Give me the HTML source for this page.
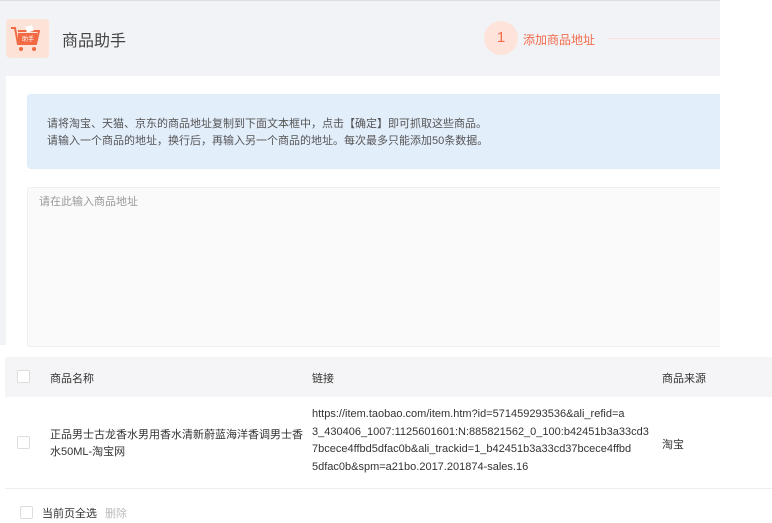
<!DOCTYPE html><html><head><meta charset="utf-8"><style>
*{margin:0;padding:0;box-sizing:border-box}
body{width:772px;height:523px;background:#fff;font-family:"Liberation Sans","Noto Sans CJK SC",sans-serif;position:relative;overflow:hidden;color:#333}
.a{position:absolute}
.cb{position:absolute;width:13px;height:13px;border:1px solid #ddd;border-radius:2px;background:#fff}
</style></head><body>
<div class="a" style="left:0;top:0;width:720px;height:345px;background:#f2f3f7;border-top:1px solid #ddd"></div>
<div class="a" style="left:6px;top:19px;width:43px;height:39px;background:#fde2d8;border-radius:4px"></div>
<svg class="a" style="left:9px;top:24px" width="36" height="30" viewBox="0 0 36 30"><path d="M2 4h4l3 16h18l3-13H9" fill="none" stroke="#f26a43" stroke-width="2"/><rect x="9" y="9" width="19" height="10" fill="#f26a43"/><text x="13" y="17" font-size="6" fill="#fff" font-family="Noto Sans CJK SC">助手</text><circle cx="12" cy="25" r="2" fill="#f26a43"/><circle cx="25" cy="25" r="2" fill="#f26a43"/><rect x="17" y="2" width="7" height="6" fill="#fff" transform="rotate(-15 20 5)"/></svg>
<div class="a" style="left:62px;top:27px;font-size:16px;color:#444">商品助手</div>
<div class="a" style="left:484px;top:21px;width:34px;height:34px;border-radius:50%;background:#fde3da;color:#f36c4a;font-size:15px;text-align:center;line-height:34px">1</div>
<div class="a" style="left:523px;top:31px;font-size:12px;color:#f36c4a">添加商品地址</div>
<div class="a" style="left:607px;top:38px;width:113px;height:1px;background:#fbe0d8"></div>
<div class="a" style="left:6px;top:76px;width:714px;height:269px;background:#fff"></div>
<div class="a" style="left:27px;top:94px;width:693px;height:75px;background:#e3eefb;border:1px solid #e0ebf9;border-right:none;border-radius:4px 0 0 4px"></div>
<div class="a" style="left:47px;top:116px;font-size:11px;color:#555;line-height:17px">请将淘宝、天猫、京东的商品地址复制到下面文本框中，点击【确定】即可抓取这些商品。<br>请输入一个商品的地址，换行后，再输入另一个商品的地址。每次最多只能添加50条数据。</div>
<div class="a" style="left:27px;top:187px;width:693px;height:160px;background:#fafafa;border:1px solid #eee;border-right:none;border-radius:3px 0 0 3px"></div>
<div class="a" style="left:39px;top:193px;font-size:11px;color:#999">请在此输入商品地址</div>
<div class="a" style="left:5px;top:357px;width:767px;height:40px;background:#f5f5f7"></div>
<div class="cb" style="left:17px;top:370px"></div>
<div class="a" style="left:50px;top:370px;font-size:11px">商品名称</div>
<div class="a" style="left:312px;top:370px;font-size:11px">链接</div>
<div class="a" style="left:662px;top:370px;font-size:11px">商品来源</div>
<div class="a" style="left:5px;top:488px;width:767px;height:1px;background:#eee"></div>
<div class="cb" style="left:17px;top:436px"></div>
<div class="a" style="left:50px;top:427px;font-size:11px;line-height:17px;white-space:nowrap">正品男士古龙香水男用香水清新蔚蓝海洋香调男士香<br>水50ML-淘宝网</div>
<div class="a" style="left:312px;top:406px;font-size:11px;line-height:17.5px;white-space:nowrap">https://item.taobao.com/item.htm?id=571459293536&amp;ali_refid=a<br>3_430406_1007:1125601601:N:885821562_0_100:b42451b3a33cd3<br>7bcece4ffbd5dfac0b&amp;ali_trackid=1_b42451b3a33cd37bcece4ffbd<br>5dfac0b&amp;spm=a21bo.2017.201874-sales.16</div>
<div class="a" style="left:662px;top:436px;font-size:11px">淘宝</div>
<div class="cb" style="left:20px;top:506px"></div>
<div class="a" style="left:42px;top:505px;font-size:11px">当前页全选</div>
<div class="a" style="left:105px;top:505px;font-size:11px;color:#bbb">删除</div>
</body></html>
